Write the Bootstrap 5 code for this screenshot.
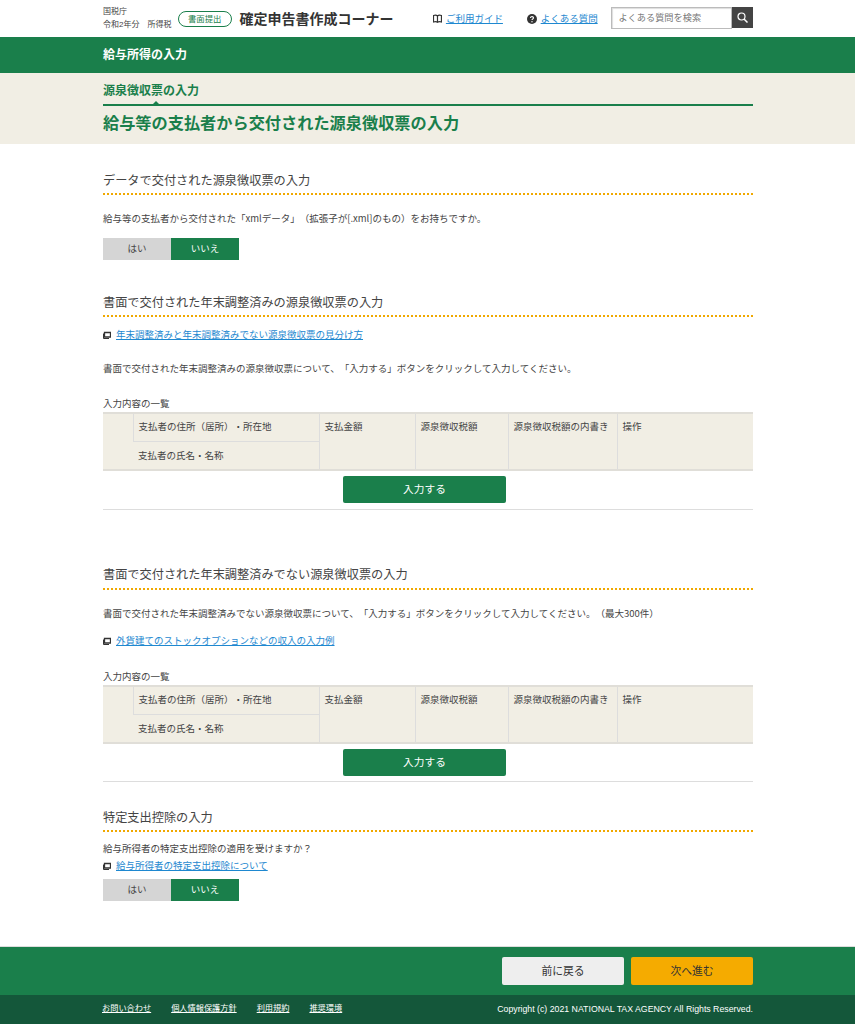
<!DOCTYPE html>
<html lang="ja"><head><meta charset="utf-8"><title>確定申告書作成コーナー</title>
<link href="https://cdn.jsdelivr.net/npm/bootstrap@5.3.0/dist/css/bootstrap.min.css" rel="stylesheet">
<style>
body{font-family:"Liberation Sans","Noto Sans CJK JP",sans-serif;font-size:9.5px;line-height:14px;color:#444;background:#fff;height:1024px;overflow:hidden;text-spacing-trim:space-all}
.wrapx{width:650px;margin-left:103px}
.topbar{height:37px}
.agency{font-size:8px;line-height:13px;width:75px;margin-top:-1px;margin-right:0}
.pill{border:1px solid #1a7f4b;color:#1a7f4b;border-radius:9px;width:54px;height:16px;font-size:8.4px;line-height:14px;text-align:center;margin-right:8px}
.corner{font-size:14px;font-weight:700;width:194px;color:#333}
.tlink{font-size:9.5px;color:#1e88d0;text-decoration:underline}
.link1{width:65px}.link2{width:71px}
.search{width:121px;height:22px;border:1px solid #bbb;box-shadow:inset 1px 1px 1px #ddd;font-size:9.2px;color:#777;padding:0 0 0 6px;line-height:20px;margin-top:-1px}
.sbtn{width:21px;height:21px;background:#444;margin-top:-2px}
.gbar{height:36px;background:#1a7f4b;color:#fff;font-size:12px;font-weight:700;line-height:37px}
.crumb{height:71px;background:#f1eee4;padding-top:10px}
.crumbtab{font-size:12px;font-weight:700;color:#1a7f4b;line-height:16px;height:23px;position:relative;border-bottom:2px solid #1a7f4b}
.crumbtab::after{content:"";position:absolute;left:50px;bottom:0;border:3px solid transparent;border-bottom-color:#1a7f4b;border-top:0}
.ttl{font-size:16.2px;font-weight:700;color:#1a7f4b;line-height:24px;margin:5px 0 0}
.sech{font-size:12.2px;font-weight:400;line-height:18px;color:#444;margin:0;padding-bottom:3px;border-bottom:2px dotted #f0a800}
.s3 .sech{padding-bottom:4px}
.para{margin:0}
.para.wide{font-family:"Noto Sans CJK JP","Liberation Sans",sans-serif;margin-top:16px}
.seg{display:flex;height:22px;width:136px}
.seg span{flex:1;text-align:center;line-height:21px}
.seg .no{background:#d5d5d5}
.seg .yes{background:#1a7f4b;color:#fff}
.tbl-lbl{line-height:14px}
.gridt{width:650px;border-collapse:collapse;table-layout:fixed;background:#f1eee4;border-top:2px solid #e0ded8;border-bottom:2px solid #e0ded8}
.gridt td{border-left:1px solid #ddd;padding:6px 5px 0;vertical-align:top;height:28.5px;line-height:14px}
.gridt tr+tr td{padding-top:7px}
.gridt td.sub{border-bottom:1px solid #ddd}
.gridt td:first-child{border-left:0}
.addwrap{height:39px;border-bottom:1px solid #ddd;padding:5px 7px 0 0}
.s3 .addwrap{height:38px}
.addbtn{width:163px;height:27px;background:#1a7f4b;color:#fff;border:0;border-radius:2px;font-size:10.7px;padding:0;line-height:27px}
.alink{color:#1e88d0;text-decoration:underline}
.ficon{display:inline-block;width:8px;height:8px;margin-right:5px;vertical-align:-1px}
.actions{height:49px;background:#1a7f4b;border-top:1px solid #ddd;padding-top:10px}
.actgap{gap:7px}
.actbtn{width:122px;height:28px;border:0;border-radius:2px;font-size:10.8px;padding:0;color:#333}
.back{background:#eee}.next{background:#f5ab00}
.foot{height:29px;background:#14573a;color:#fff;font-size:8.2px;line-height:28px}
.foot a{color:#fff;text-decoration:underline}
.footlinks{gap:20px;margin-left:-1px}
.copyr{font-size:8.75px}
.s1{height:150px;padding-top:28px}
.s2{height:272px}
.s3{height:243px}
.s4{height:64px}
.main{height:802px}
.mt3{margin-top:3px}.mt6{margin-top:6px}.mt10{margin-top:10px}.mt11{margin-top:11px}.mt13{margin-top:13px}.mt14{margin-top:14px}.mt20{margin-top:20px}.mt21{margin-top:21px;margin-bottom:1px}.mt22{margin-top:22px;margin-bottom:1px}
.c1{width:30px}.c2{width:186px}.c3{width:96px}.c4{width:93px}.c5{width:109px}
</style></head><body>
<header class="topbar wrapx d-flex align-items-center">
 <div class="agency">国税庁<br>令和2年分&emsp;所得税</div>
 <div class="pill">書面提出</div>
 <div class="corner">確定申告書作成コーナー</div>
 <svg class="me-1" width="9" height="9" viewBox="0 0 9 9"><path d="M.5 1.500C2 1 3.500 1 4.500 2 5.500 1 7 1 8.500 1.500V8C7 7.500 5.500 7.500 4.500 8.300 3.500 7.500 2 7.500.500 8Z M4.500 2V8" fill="none" stroke="#333" stroke-width="1.200"/></svg>
 <a class="tlink link1" href="#">ご利用ガイド</a>
 <svg class="me-1 ms-3" width="10" height="10" viewBox="0 0 10 10"><circle cx="5" cy="5" r="5" fill="#333"/><path d="M3.500 4C3.500 2 6.700 2.300 6.500 4 6.400 5 5 5 5 6" fill="none" stroke="#fff" stroke-width="1.100"/><circle cx="5" cy="7.800" r=".7" fill="#fff"/></svg>
 <a class="tlink link2" href="#">よくある質問</a>
 <div class="search">よくある質問を検索</div>
 <div class="sbtn d-flex align-items-center justify-content-center"><svg width="11" height="11" viewBox="0 0 11 11"><circle cx="4.500" cy="4.500" r="3.500" fill="none" stroke="#fff" stroke-width="1.200"/><path d="M7 7l3.500 3.500" stroke="#fff" stroke-width="1.500"/></svg></div>
</header>
<div class="gbar"><div class="wrapx">給与所得の入力</div></div>
<div class="crumb"><div class="wrapx"><div class="crumbtab">源泉徴収票の入力</div><h1 class="ttl">給与等の支払者から交付された源泉徴収票の入力</h1></div></div>
<main class="main wrapx">
 <section class="s1">
  <h2 class="sech">データで交付された源泉徴収票の入力</h2>
  <p class="para wide">給与等の支払者から交付された「xmlデータ」（拡張子が[.xml]のもの）をお持ちですか。</p>
  <div class="seg mt13"><span class="no">はい</span><span class="yes">いいえ</span></div>
 </section>
 <section class="s2">
  <h2 class="sech">書面で交付された年末調整済みの源泉徴収票の入力</h2>
  <p class="para mt11"><svg class="ficon" viewBox="0 0 8 8"><path d="M1.500 1.500H7.500V6H1.500Z" fill="none" stroke="#333" stroke-width="1.300"/><path d="M.5 2.500V7.500H6" fill="none" stroke="#333"/></svg><a class="alink" href="#">年末調整済みと年末調整済みでない源泉徴収票の見分け方</a></p>
  <p class="para mt20">書面で交付された年末調整済みの源泉徴収票について、「入力する」ボタンをクリックして入力してください。</p>
  <p class="tbl-lbl para mt21">入力内容の一覧</p>
  <table class="gridt"><colgroup><col class="c1"><col class="c2"><col class="c3"><col class="c4"><col class="c5"><col></colgroup>
   <tr><td rowspan="2"></td><td class="sub">支払者の住所（居所）・所在地</td><td rowspan="2">支払金額</td><td rowspan="2">源泉徴収税額</td><td rowspan="2">源泉徴収税額の内書き</td><td rowspan="2">操作</td></tr>
   <tr><td>支払者の氏名・名称</td></tr></table>
  <div class="addwrap text-center"><button class="btn addbtn">入力する</button></div>
 </section>
 <section class="s3">
  <h2 class="sech">書面で交付された年末調整済みでない源泉徴収票の入力</h2>
  <p class="para wide">書面で交付された年末調整済みでない源泉徴収票について、「入力する」ボタンをクリックして入力してください。（最大300件）</p>
  <p class="para mt14"><svg class="ficon" viewBox="0 0 8 8"><path d="M1.500 1.500H7.500V6H1.500Z" fill="none" stroke="#333" stroke-width="1.300"/><path d="M.5 2.500V7.500H6" fill="none" stroke="#333"/></svg><a class="alink" href="#">外貨建てのストックオプションなどの収入の入力例</a></p>
  <p class="tbl-lbl para mt22">入力内容の一覧</p>
  <table class="gridt"><colgroup><col class="c1"><col class="c2"><col class="c3"><col class="c4"><col class="c5"><col></colgroup>
   <tr><td rowspan="2"></td><td class="sub">支払者の住所（居所）・所在地</td><td rowspan="2">支払金額</td><td rowspan="2">源泉徴収税額</td><td rowspan="2">源泉徴収税額の内書き</td><td rowspan="2">操作</td></tr>
   <tr><td>支払者の氏名・名称</td></tr></table>
  <div class="addwrap text-center"><button class="btn addbtn">入力する</button></div>
 </section>
 <section class="s4">
  <h2 class="sech">特定支出控除の入力</h2>
  <p class="para mt10">給与所得者の特定支出控除の適用を受けますか？</p>
  <p class="para mt3"><svg class="ficon" viewBox="0 0 8 8"><path d="M1.500 1.500H7.500V6H1.500Z" fill="none" stroke="#333" stroke-width="1.300"/><path d="M.5 2.500V7.500H6" fill="none" stroke="#333"/></svg><a class="alink" href="#">給与所得者の特定支出控除について</a></p>
  <div class="seg mt6"><span class="no">はい</span><span class="yes">いいえ</span></div>
 </section>
</main>
<div class="actions"><div class="wrapx d-flex justify-content-end align-items-start actgap"><button class="btn actbtn back">前に戻る</button><button class="btn actbtn next">次へ進む</button></div></div>
<footer class="foot"><div class="wrapx d-flex justify-content-between"><div class="d-flex footlinks"><a href="#">お問い合わせ</a><a href="#">個人情報保護方針</a><a href="#">利用規約</a><a href="#">推奨環境</a></div><div class="copyr">Copyright (c) 2021 NATIONAL TAX AGENCY All Rights Reserved.</div></div></footer>
</body></html>
